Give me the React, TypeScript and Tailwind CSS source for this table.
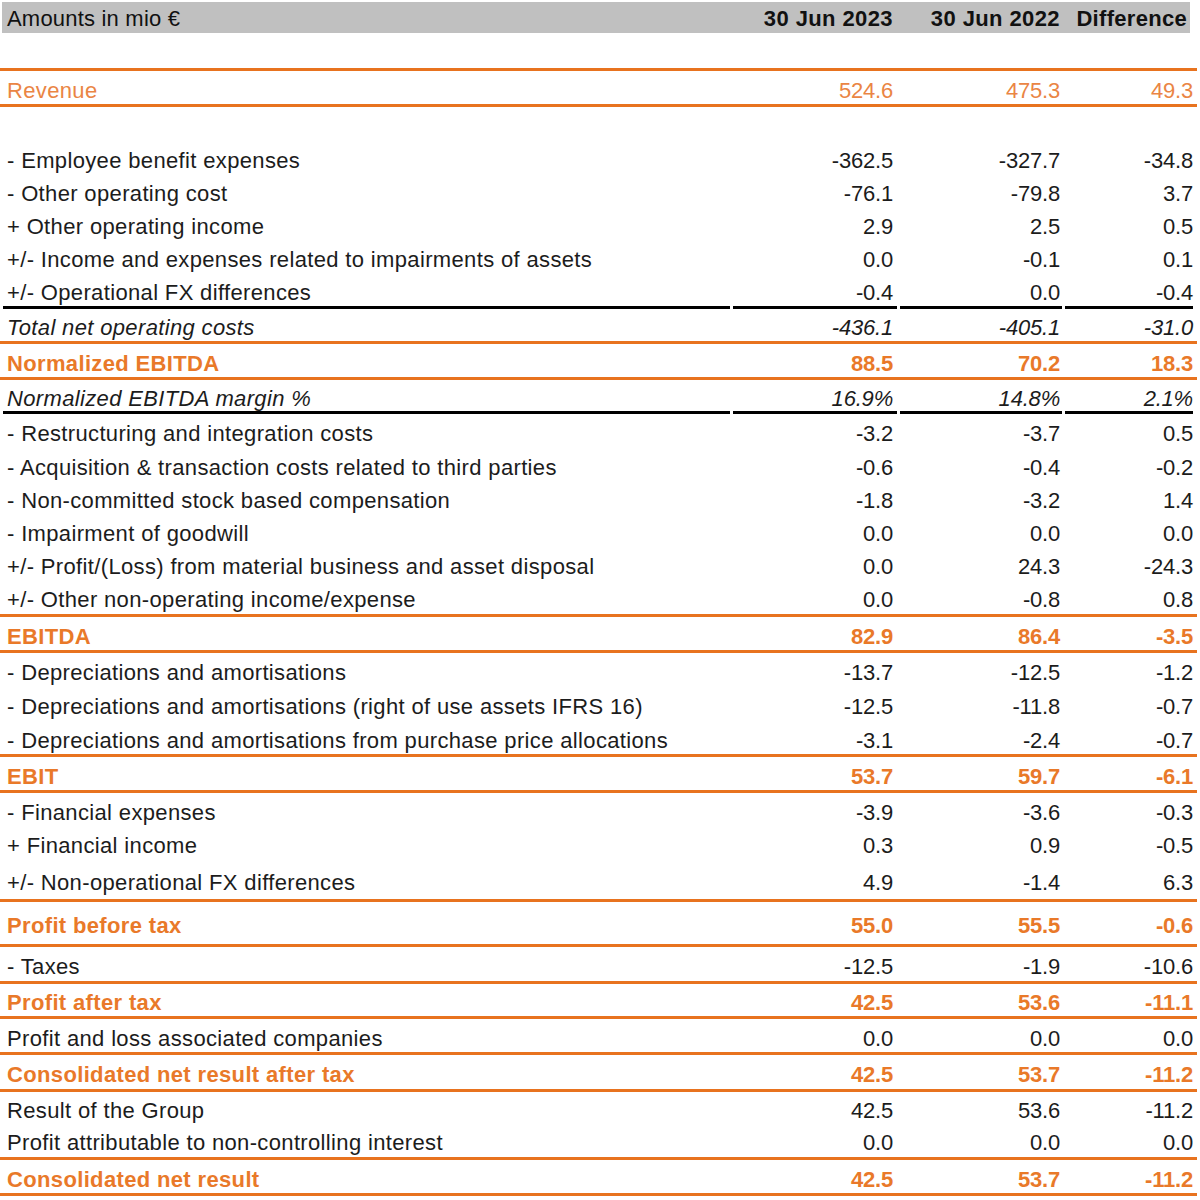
import React from "react";

type Kind = "plain" | "italic" | "total" | "revenue";

type Item =
  | { t: "gap"; h: string }
  | { t: "orange" }
  | { t: "black" }
  | { t: "row"; label: string; v: [string, string, string]; kind?: Kind; h?: string };

const items: Item[] = [
  { t: "gap", h: "h-[35px]" },
  { t: "orange" },
  { t: "row", label: "Revenue", v: ["524.6", "475.3", "49.3"], kind: "revenue" },
  { t: "orange" },
  { t: "gap", h: "h-[34px]" },
  { t: "row", label: "- Employee benefit expenses", v: ["-362.5", "-327.7", "-34.8"] },
  { t: "row", label: "- Other operating cost", v: ["-76.1", "-79.8", "3.7"] },
  { t: "row", label: "+ Other operating income", v: ["2.9", "2.5", "0.5"] },
  { t: "row", label: "+/- Income and expenses related to impairments of assets", v: ["0.0", "-0.1", "0.1"] },
  { t: "row", label: "+/- Operational FX differences", v: ["-0.4", "0.0", "-0.4"] },
  { t: "black" },
  { t: "row", label: "Total net operating costs", v: ["-436.1", "-405.1", "-31.0"], kind: "italic", h: "h-[32px]" },
  { t: "orange" },
  { t: "row", label: "Normalized EBITDA", v: ["88.5", "70.2", "18.3"], kind: "total" },
  { t: "orange" },
  { t: "row", label: "Normalized EBITDA margin %", v: ["16.9%", "14.8%", "2.1%"], kind: "italic", h: "h-[31px]" },
  { t: "black" },
  { t: "row", label: "- Restructuring and integration costs", v: ["-3.2", "-3.7", "0.5"], h: "h-[34px]" },
  { t: "row", label: "- Acquisition & transaction costs related to third parties", v: ["-0.6", "-0.4", "-0.2"] },
  { t: "row", label: "- Non-committed stock based compensation", v: ["-1.8", "-3.2", "1.4"] },
  { t: "row", label: "- Impairment of goodwill", v: ["0.0", "0.0", "0.0"] },
  { t: "row", label: "+/- Profit/(Loss) from material business and asset disposal", v: ["0.0", "24.3", "-24.3"] },
  { t: "row", label: "+/- Other non-operating income/expense", v: ["0.0", "-0.8", "0.8"], h: "h-[34px]" },
  { t: "orange" },
  { t: "row", label: "EBITDA", v: ["82.9", "86.4", "-3.5"], kind: "total" },
  { t: "orange" },
  { t: "row", label: "- Depreciations and amortisations", v: ["-13.7", "-12.5", "-1.2"], h: "h-[34px]" },
  { t: "row", label: "- Depreciations and amortisations (right of use assets IFRS 16)", v: ["-12.5", "-11.8", "-0.7"], h: "h-[34px]" },
  { t: "row", label: "- Depreciations and amortisations from purchase price allocations", v: ["-3.1", "-2.4", "-0.7"] },
  { t: "orange" },
  { t: "row", label: "EBIT", v: ["53.7", "59.7", "-6.1"], kind: "total" },
  { t: "orange" },
  { t: "row", label: "- Financial expenses", v: ["-3.9", "-3.6", "-0.3"] },
  { t: "row", label: "+ Financial income", v: ["0.3", "0.9", "-0.5"], h: "h-[34px]" },
  { t: "row", label: "+/- Non-operational FX differences", v: ["4.9", "-1.4", "6.3"], h: "h-[39px]" },
  { t: "orange" },
  { t: "row", label: "Profit before tax", v: ["55.0", "55.5", "-0.6"], kind: "total", h: "h-[42px]" },
  { t: "orange" },
  { t: "row", label: "- Taxes", v: ["-12.5", "-1.9", "-10.6"], h: "h-[34px]" },
  { t: "orange" },
  { t: "row", label: "Profit after tax", v: ["42.5", "53.6", "-11.1"], kind: "total", h: "h-[32px]" },
  { t: "orange" },
  { t: "row", label: "Profit and loss associated companies", v: ["0.0", "0.0", "0.0"] },
  { t: "orange" },
  { t: "row", label: "Consolidated net result after tax", v: ["42.5", "53.7", "-11.2"], kind: "total", h: "h-[34px]" },
  { t: "orange" },
  { t: "row", label: "Result of the Group", v: ["42.5", "53.6", "-11.2"], h: "h-[31px]" },
  { t: "row", label: "Profit attributable to non-controlling interest", v: ["0.0", "0.0", "0.0"], h: "h-[34px]" },
  { t: "orange" },
  { t: "row", label: "Consolidated net result", v: ["42.5", "53.7", "-11.2"], kind: "total" },
  { t: "orange" },
];

const kindClass: Record<Kind, string> = {
  plain: "text-[#1c1c1c]",
  italic: "italic text-[#1c1c1c]",
  total: "font-bold text-[#e97929]",
  revenue: "text-[#ea8544]",
};

const DataRow = ({ label, v, kind = "plain", h = "h-[33px]" }: { label: string; v: [string, string, string]; kind?: Kind; h?: string }) => (
  <div className={`grid grid-cols-[730px_163px_167px_133px] items-center pt-[6px] ${h} ${kindClass[kind]}`}>
    <div className="pl-[7px] whitespace-nowrap tracking-[0.35px]">{label}</div>
    <div className="text-right">{v[0]}</div>
    <div className="text-right">{v[1]}</div>
    <div className="text-right">{v[2]}</div>
  </div>
);

export default function App() {
  return (
    <div className="w-[1200px] h-[1200px] bg-white pt-[2px] font-['Liberation_Sans',Arial,sans-serif] text-[22px] leading-none tracking-[-0.2px]">
      <div className="ml-[2px] w-[1188px] h-[31px] bg-[#c0c0c0] grid grid-cols-[728px_163px_167px_130px] items-center pt-[2px] text-[#111]">
        <div className="pl-[5px] tracking-[0.2px]">Amounts in mio €</div>
        <div className="text-right font-bold tracking-[0.4px]">30 Jun 2023</div>
        <div className="text-right font-bold tracking-[0.4px]">30 Jun 2022</div>
        <div className="text-right font-bold pr-[3px] tracking-[0.3px]">Difference</div>
      </div>
      {items.map((it, i) => {
        if (it.t === "gap") return <div key={i} className={it.h} />;
        if (it.t === "orange") return <div key={i} className="w-[1197px] h-[3px] bg-[#e8731f]" />;
        if (it.t === "black")
          return (
            <div key={i} className="grid grid-cols-[727px_164px_162px_128px] gap-[3px] pl-[3px]">
              <div className="h-[3px] bg-black" />
              <div className="h-[3px] bg-black" />
              <div className="h-[3px] bg-black" />
              <div className="h-[3px] bg-black" />
            </div>
          );
        return <DataRow key={i} label={it.label} v={it.v} kind={it.kind} h={it.h} />;
      })}
    </div>
  );
}
